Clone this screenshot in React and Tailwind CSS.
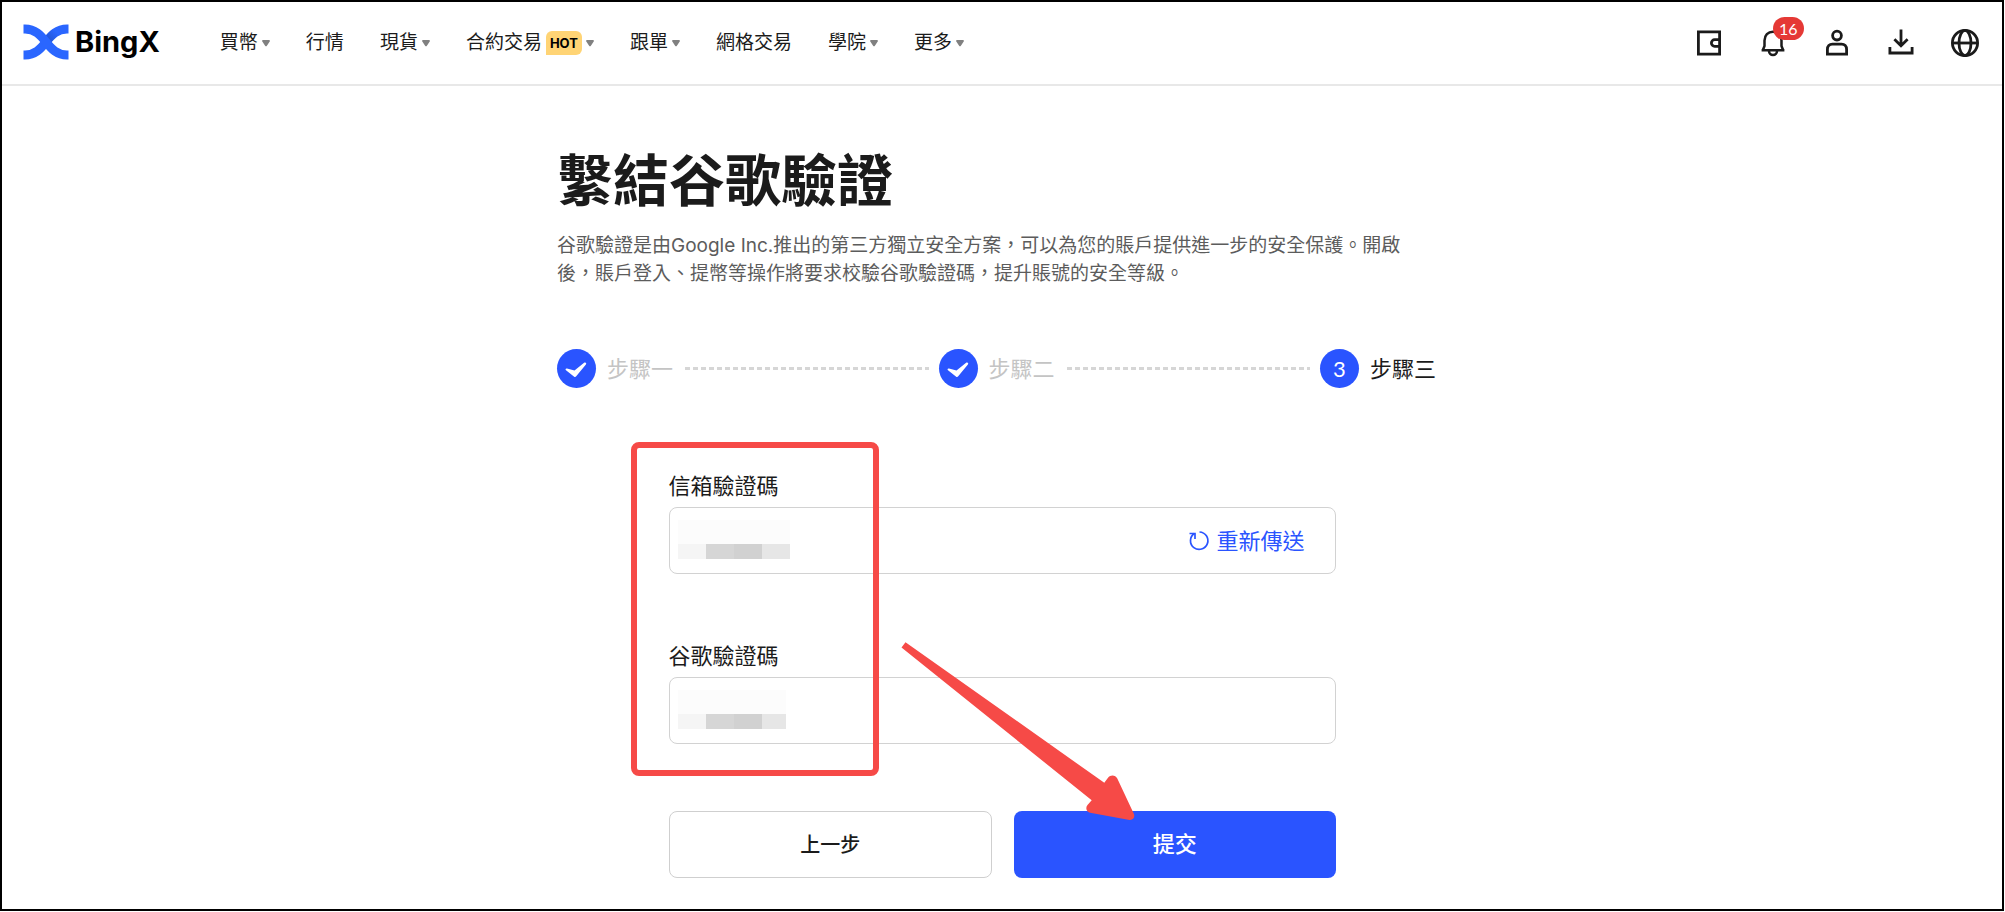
import { useState } from 'react';

const NAV_ITEMS = [
  { label: '買幣', menu: true },
  { label: '行情' },
  { label: '現貨', menu: true },
  { label: '合約交易', menu: true, hot: true },
  { label: '跟單', menu: true },
  { label: '網格交易' },
  { label: '學院', menu: true },
  { label: '更多', menu: true },
];

const STEPS = [
  { label: '步驟一', done: true },
  { label: '步驟二', done: true },
  { label: '步驟三', done: false },
];

const Logo = () => (
  <a href="#" aria-label="BingX" className="flex items-center gap-[6px] pb-[3px]">
    <svg width="46" height="36" viewBox="0 0 46 36" fill="none">
      <defs>
        <linearGradient id="fold" x1="34" y1="6" x2="20" y2="20" gradientUnits="userSpaceOnUse">
          <stop offset="0.1" stopColor="#2a66ff" />
          <stop offset="0.7" stopColor="#2154d2" />
          <stop offset="1" stopColor="#2a66ff" />
        </linearGradient>
      </defs>
      <path d="M45.500 5H44C34 5 28.500 11 23 18S12 31 2 31H0.500" stroke="url(#fold)" strokeWidth="9" />
      <path d="M0.500 5H2C12 5 17.500 11 23 18S34 31 44 31H45.500" stroke="#2a66ff" strokeWidth="9" />
    </svg>
    <span className="text-[29px] leading-9 font-bold text-black">BingX</span>
  </a>
);

const Caret = () => (
  <svg width="8" height="8" viewBox="0 0 8 8" fill="#808080">
    <path d="M1 1h6c.9 0 1.200.9.700 1.600L4.900 6.800c-.5.7-1.300.7-1.800 0L.3 2.600C-.2 1.900.1 1 1 1z" />
  </svg>
);

const iconProps = {
  width: 32,
  height: 32,
  viewBox: '0 0 32 32',
  fill: 'none',
  stroke: '#1b1b1b',
  strokeWidth: 2.8,
};

const WalletIcon = () => (
  <svg {...iconProps}>
    <path d="M5.400 4.900h21.200v22.200H5.400z" />
    <path d="M26.600 12.700h-4.900a3.300 3.300 0 0 0 0 6.600h4.900" />
  </svg>
);

const BellIcon = () => (
  <svg {...iconProps} strokeWidth="2.500">
    <path d="M4.600 23.300h22.800M5.800 23.300l1.700-4.400V13.500c0-5.200 3.500-8.800 8.500-8.800s8.500 3.600 8.500 8.800v5.400l1.700 4.400" />
    <path d="M12 24a4 4 0 0 0 8 0" />
  </svg>
);

const UserIcon = () => (
  <svg {...iconProps}>
    <circle cx="16" cy="8.600" r="4.400" />
    <path d="M6.400 27.100v-4.700c0-3.200 2-5.300 5-5.300h9.200c3 0 5 2.100 5 5.300v4.700z" />
  </svg>
);

const DownloadIcon = () => (
  <svg {...iconProps}>
    <path d="M16 2.500v15.500M9.400 12.200l6.600 6.500 6.600-6.500M4.900 20v6h22.200v-6" />
  </svg>
);

const GlobeIcon = () => (
  <svg {...iconProps}>
    <circle cx="16" cy="16" r="12.600" />
    <ellipse cx="16" cy="16" rx="6" ry="12.600" />
    <path d="M3.400 16h25.200" />
  </svg>
);

const CheckIcon = () => (
  <svg width="39" height="39" viewBox="0 0 39 39" fill="#fff">
    <path d="M10 19.500 17.500 21.500 26.800 13.900C28.300 12.800 29.900 13.900 28.900 15.400L19.200 27.300C18.500 28.100 17.700 28.100 16.900 27.400L9 21.300C8.100 20.400 8.700 19.200 10 19.500Z" />
  </svg>
);

const ResendIcon = () => (
  <svg width="22" height="22" viewBox="0 0 22 22" fill="none" stroke="#2a54ff" strokeWidth="1.700">
    <path d="M11.500 2A8.700 8.700 0 1 1 6.300 3.500" />
    <path d="M1.500 3.500H7V9" />
  </svg>
);

// blurred-out value shown over a code field
const Mosaic = ({ narrow }) => (
  <div className="pointer-events-none absolute top-3 left-2">
    <div className="h-6 bg-[#fcfcfc]" />
    <div className="flex h-[15px]">
      <div className="w-7 bg-[#f5f5f5]" />
      <div className="w-7 bg-[#d6d6d6]" />
      <div className="w-7 bg-[#d1d1d1]" />
      <div className={narrow ? 'w-6 bg-[#e6e6e6]' : 'w-7 bg-[#e6e6e6]'} />
    </div>
  </div>
);

const CodeField = ({ id, label, narrow, action }) => {
  const [value, setValue] = useState('');

  return (
    <div>
      <label htmlFor={id} className="block text-[22px] leading-8">
        {label}
      </label>
      <div className="relative mt-[5px] flex h-[67px] items-center rounded-lg border border-[#d2d2d2] pr-[30px]">
        <input
          id={id}
          type="text"
          value={value}
          onChange={(e) => setValue(e.target.value)}
          className="h-full min-w-0 flex-1 rounded-lg bg-transparent px-6 text-[22px] outline-none"
        />
        {action}
        {!value && <Mosaic narrow={narrow} />}
      </div>
    </div>
  );
};

const Header = () => (
  <header className="flex h-[84px] items-center border-b-2 border-[#e8e8e8] px-[21px]">
    <Logo />
    <nav className="ml-[60px] flex items-center gap-9">
      {NAV_ITEMS.map((item) => (
        <a key={item.label} href="#" className="flex items-center gap-1 text-[19px] leading-6 whitespace-nowrap">
          {item.label}
          {item.hot && (
            <span className="rounded-t-md rounded-br-md bg-[#ffd475] px-1 text-[13px] leading-6 font-bold text-black">
              HOT
            </span>
          )}
          {item.menu && <Caret />}
        </a>
      ))}
    </nav>
    <div className="ml-auto flex items-center gap-8">
      <button type="button" aria-label="錢包"><WalletIcon /></button>
      <button type="button" aria-label="通知" className="relative">
        <BellIcon />
        <span className="absolute -top-[10px] left-4 rounded-full bg-[#e53935] px-[6px] font-[Lato] text-base leading-[23px] text-white">
          16
        </span>
      </button>
      <button type="button" aria-label="帳戶"><UserIcon /></button>
      <button type="button" aria-label="下載"><DownloadIcon /></button>
      <button type="button" aria-label="語言"><GlobeIcon /></button>
    </div>
  </header>
);

const Steps = () => (
  <ol className="mt-[61px] flex items-center pr-[11px] text-[22px] leading-8">
    {STEPS.map((step, i) => (
      <li key={step.label} className={i < STEPS.length - 1 ? 'flex flex-1 items-center' : 'flex items-center'}>
        <span className="flex size-[39px] items-center justify-center rounded-full bg-[#2a54ff] font-[Lato] text-white">
          {step.done ? <CheckIcon /> : i + 1}
        </span>
        <span className={step.done ? 'ml-[11px] text-[#c4c4c4]' : 'ml-[11px]'}>{step.label}</span>
        {i < STEPS.length - 1 && (
          <span className="mr-[10px] ml-3 h-[3px] flex-1 bg-[repeating-linear-gradient(90deg,#d6d6d6_0_5px,transparent_5px_8px)]" />
        )}
      </li>
    ))}
  </ol>
);

export default function App() {
  return (
    <div
      lang="zh-TW"
      className="flex min-h-screen bg-white pr-px pb-px font-[Inter,'Noto_Sans_CJK_TC',sans-serif] text-[#1b1b1b]"
    >
      <div className="min-w-0 flex-1 border-2 border-black">
        <Header />

        <main className="mx-auto max-w-[890px] pt-[63px]">
          <h1 className="text-[56px] leading-[64px] font-bold">繫結谷歌驗證</h1>
          <p className="mt-[19px] max-w-[860px] text-[19px] leading-7 text-[#5c5c5c]">
            谷歌驗證是由Google Inc.推出的第三方獨立安全方案，可以為您的賬戶提供進一步的安全保護。開啟後，賬戶登入、提幣等操作將要求校驗谷歌驗證碼，提升賬號的安全等級。
          </p>

          <Steps />

          <form className="relative mx-auto mt-[82px] max-w-[667px]" onSubmit={(e) => e.preventDefault()}>
            <div className="flex flex-col gap-[66px]">
              <CodeField
                id="email-code"
                label="信箱驗證碼"
                action={
                  <button type="button" className="flex items-center gap-[6px] text-[22px] leading-8 text-[#2a54ff]">
                    <ResendIcon />
                    重新傳送
                  </button>
                }
              />
              <CodeField id="google-code" label="谷歌驗證碼" narrow />
            </div>

            <div className="mt-[67px] flex gap-[22px]">
              <button type="button" className="h-[67px] flex-1 rounded-lg border border-[#cfcfcf] text-xl font-medium">
                上一步
              </button>
              <button type="submit" className="h-[67px] flex-1 rounded-lg bg-[#2a54ff] text-[22px] font-medium text-white">
                提交
              </button>
            </div>

            {/* callouts */}
            <div className="pointer-events-none absolute -top-7 -left-[38px] h-[334px] w-[248px] rounded-lg border-6 border-[#f64a47]" />
            <svg
              className="pointer-events-none absolute top-[170px] left-[231px]"
              width="236"
              height="182"
              viewBox="0 0 236 182"
              fill="#f64a47"
            >
              <path d="M1.500 7.500 5.500 2.200 204.300 142.800 208 137.700C210.500 134.500 215.500 134.800 217.300 138.500L233.700 173.500C235.500 177 233 180.500 229.500 180L191.500 173C186.500 172.500 185 168 187.500 165L191.700 160.300Z" />
            </svg>
          </form>
        </main>
      </div>
    </div>
  );
}
